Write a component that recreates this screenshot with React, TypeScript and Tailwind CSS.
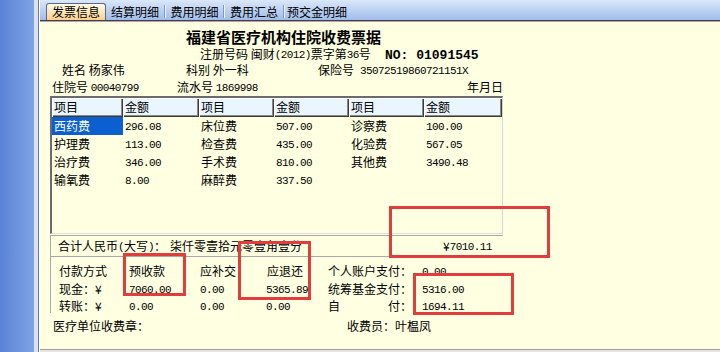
import React from "react";

// ASCII text (digits, brackets) drawn half-width like the SimSun original
function M({ children, className = "" }: { children: React.ReactNode; className?: string }) {
  return (
    <span className={"font-['Liberation_Mono',monospace] text-[11px] tracking-[-0.6px] align-[1px] " + className}>
      {children}
    </span>
  );
}

const tabs = [
  { label: "结算明细", w: "w-[58px]" },
  { label: "费用明细", w: "w-[57px]" },
  { label: "费用汇总", w: "w-[58px]" },
  { label: "预交金明细", w: "w-[64px]" },
];

const colWidths = ["w-[71px]", "w-[76px]", "w-[75px]", "w-[75px]", "w-[75px]", "w-[78px]"];
const headers = ["项目", "金额", "项目", "金额", "项目", "金额"];

const feeRows = [
  ["西药费", "296.08", "床位费", "507.00", "诊察费", "100.00"],
  ["护理费", "113.00", "检查费", "435.00", "化验费", "567.05"],
  ["治疗费", "346.00", "手术费", "810.00", "其他费", "3490.48"],
  ["输氧费", "8.00", "麻醉费", "337.50", "", ""],
];

const payCols = ["w-[70px]", "w-[71px]", "w-[66px]", "w-[62px]", "w-[94px]"];

function RedBox({ className }: { className: string }) {
  return <div className={"absolute border-[3px] border-[#e23d3d] " + className} />;
}

function FeeTable() {
  return (
    <div className="ml-[10px] mt-[1px] w-[453px] h-[138px] border-t-2 border-l-2 border-t-[#6b6b6b] border-l-[#6b6b6b] border-r border-b border-r-[#d6d6d6] border-b-[#dedede]">
      <div className="flex">
        {headers.map((h, i) => (
          <div
            key={i}
            className={
              colWidths[i] +
              " h-[19px] leading-[18px] pl-[2px] bg-[#eaf6fe] shadow-[inset_1px_1px_0_#ffffff,inset_-1px_-1px_0_#3a3a3a,inset_-2px_-2px_0_#8a8a8a]"
            }
          >
            {h}
          </div>
        ))}
      </div>
      {feeRows.map((row, r) => (
        <div key={r} className="flex h-[18px]">
          {row.map((cell, c) => {
            const selected = r === 0 && c === 0;
            return (
              <div
                key={c}
                className={
                  colWidths[c] +
                  " h-full leading-[18px] pl-[2px] whitespace-nowrap " +
                  (selected ? "bg-[#0b5fce] text-white" : "")
                }
              >
                {c % 2 === 1 ? <M>{cell}</M> : cell}
              </div>
            );
          })}
        </div>
      ))}
    </div>
  );
}

function PayRow({ cells, last, h }: { cells: React.ReactNode[]; last: React.ReactNode; h: string }) {
  return (
    <div className={h + " whitespace-nowrap"}>
      {cells.map((c, i) => (
        <span key={i} className={payCols[i] + " inline-block"}>
          {c}
        </span>
      ))}
      <span>{last}</span>
    </div>
  );
}

export default function App() {
  return (
    <div className="relative w-[720px] h-[352px] flex overflow-hidden text-black font-['Noto_Sans_CJK_SC',sans-serif] text-[12px] leading-none">
      <div className="w-[34px] h-full bg-linear-to-r from-[#5a83d7] to-[#7fa3e5]" />
      <div className="w-[4px] h-full bg-[#d8e0f2]" />
      <div className="w-[1px] h-full bg-[#6f7c95]" />
      <div className="w-[1px] h-full bg-white" />

      <div className="flex-1 flex flex-col">
        {/* tab strip */}
        <div className="h-[20px] flex items-end pl-[6px] bg-linear-to-b from-[#dbe7f9] to-[#9fbdeb]">
          <div className="w-[60px] h-[17px] flex items-center justify-center border border-b-0 border-[#58698e] rounded-t-[3px] bg-linear-to-b from-[#fffbe8] to-[#fbd08a]">
            发票信息
          </div>
          {tabs.map((t, i) => (
            <React.Fragment key={t.label}>
              {i > 0 && (
                <div className="w-[2px] h-[13px] mb-[2px] border-l border-l-[#7c97c9] border-r border-r-[#eef3fc]" />
              )}
              <div className={t.w + " h-[17px] flex items-center justify-center"}>{t.label}</div>
            </React.Fragment>
          ))}
        </div>
        <div className="h-[1px] bg-[#24408a]" />
        <div className="h-[1px] bg-[#d4a266]" />

        {/* invoice body */}
        <div className="flex-1 flex flex-col bg-[#ffffe1]">
          <div className="mt-[6px] h-[18px] leading-[18px] pl-[146px] text-[15px] font-bold whitespace-nowrap">
            福建省医疗机构住院收费票据
          </div>
          <div className="h-[16px] leading-[16px] pl-[160px] whitespace-nowrap">
            <span className="inline-block w-[185px]">
              注册号码 闽财<M>(2012)</M>票字第<M>36</M>号
            </span>
            <span className="font-['Liberation_Mono',monospace] text-[13px] font-bold">NO: 01091545</span>
          </div>
          <div className="h-[16px] leading-[16px] pl-[22px] whitespace-nowrap">
            <span className="inline-block w-[124px]">姓名 杨家伟</span>
            <span className="inline-block w-[132px]">科别 外一科</span>
            <span className="inline-block w-[42px]">保险号</span>
            <M>35072519860721151X</M>
          </div>
          <div className="h-[17px] leading-[17px] ml-[12px] w-[451px] flex justify-between whitespace-nowrap">
            <span>
              <span className="inline-block w-[125px]">
                住院号 <M>00040799</M>
              </span>
              流水号 <M>1869998</M>
            </span>
            <span>年月日</span>
          </div>

          <FeeTable />

          {/* total in words */}
          <div className="ml-[10px] mt-[1px] h-[21px] leading-[20px] w-[453px] border-t border-l border-[#a8a8a8] pl-[7px] whitespace-nowrap">
            <span className="inline-block w-[112px]">
              合计人民币<M>(</M>大写<M>)</M>：
            </span>
            <span className="inline-block w-[273px]">柒仟零壹拾元零壹角壹分</span>
            <span>
              ¥<M>7010.11</M>
            </span>
          </div>

          {/* payment breakdown */}
          <div className="ml-[10px] h-[57px] w-[453px] border-t border-l border-[#a8a8a8] pt-[5px] pl-[8px]">
            <PayRow
              h="h-[18px] leading-[17px]"
              cells={["付款方式", "预收款", "应补交", <span className="pl-[1px]">应退还</span>, "个人账户支付："]}
              last={<M>0.00</M>}
            />
            <PayRow
              h="h-[17px] leading-[17px]"
              cells={["现金：¥", <M>7060.00</M>, <M>0.00</M>, <M>5365.89</M>, "统筹基金支付："]}
              last={<M>5316.00</M>}
            />
            <PayRow
              h="h-[18px] leading-[17px]"
              cells={[
                "转账：¥",
                <M>0.00</M>,
                <M>0.00</M>,
                <M>0.00</M>,
                <span className="inline-flex w-[84px] justify-between">
                  <span>自</span>
                  <span>付：</span>
                </span>,
              ]}
              last={<M>1694.11</M>}
            />
          </div>

          <div className="mt-[5px] h-[16px] leading-[16px] pl-[13px] whitespace-nowrap">
            <span className="inline-block w-[294px]">医疗单位收费章：</span>
            <span>收费员：叶榅凤</span>
          </div>
        </div>
        <div className="h-[1px] bg-[#a0a0a0]" />
        <div className="h-[2px] bg-[#e4e4e4]" />
      </div>

      <RedBox className="left-[389px] top-[206px] w-[161px] h-[52px]" />
      <RedBox className="left-[123px] top-[253px] w-[63px] h-[43px]" />
      <RedBox className="left-[238px] top-[241px] w-[73px] h-[59px]" />
      <RedBox className="left-[413px] top-[273px] w-[101px] h-[42px]" />
    </div>
  );
}
